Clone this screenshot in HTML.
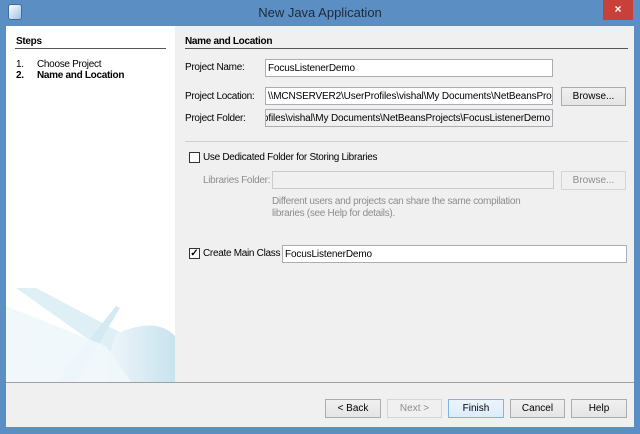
<!DOCTYPE html>
<html><head><style>
body{margin:0;width:640px;height:434px;overflow:hidden;background:#5b8ec2;font-family:"Liberation Sans",sans-serif;font-size:10px;color:#000;position:relative}
div,span{position:absolute;box-sizing:border-box}
.t{white-space:nowrap;letter-spacing:-0.3px}
.f{background:#fff;border:1px solid #abadb3;height:18px;padding:3px 2px;white-space:nowrap;overflow:hidden;letter-spacing:-0.15px}
.b{border:1px solid #acacac;background:linear-gradient(#f0f0f0,#e5e5e5);height:19px;text-align:center;line-height:17px}
.g{color:#8d8d8d}
</style></head><body>
<div style="left:8px;top:4px;width:14px;height:16px;border-radius:3px;background:linear-gradient(135deg,#fff,#9ec0e6);border:1px solid #3c6ea6"></div>
<div class="t" style="left:0;width:640px;top:5px;text-align:center;font-size:13px;color:#1d2b3a;letter-spacing:0">New Java Application</div>
<div style="left:603px;top:0;width:30px;height:20px;background:#c7403a;color:#fff;text-align:center;font-size:12px;line-height:19px;font-weight:bold">×</div>
<div style="left:6px;top:26px;width:628px;height:401px;background:#f0f0f0"></div>
<div style="left:6px;top:26px;width:169px;height:356px;background:#fff;overflow:hidden">
<svg width="169" height="356" style="position:absolute;left:0;top:0">
<defs><linearGradient id="g1" x1="0" y1="0" x2="1" y2="0"><stop offset="0" stop-color="#f2f8fb"/><stop offset="1" stop-color="#c8e3ee"/></linearGradient></defs>
<path d="M10 262 L30 262 L140 320 L150 340 L120 340 Z" fill="#deeff6"/>
<path d="M50 356 L110 280 L114 282 L70 356 Z" fill="#d4eaf3"/>
<path d="M110 308 Q150 290 169 310 L169 356 L95 356 Z" fill="url(#g1)"/>
<path d="M0 280 L100 320 L125 356 L0 356 Z" fill="#f0f7fb" opacity=".9"/>
</svg>
</div>
<div style="left:6px;top:382px;width:628px;height:1px;background:#a0a0a0"></div>
<div class="t" style="left:16px;top:36px;font-weight:bold">Steps</div>
<div style="left:15px;top:48px;width:151px;height:1px;background:#555"></div>
<div class="t" style="left:16px;top:59px">1.</div><div class="t" style="left:37px;top:59px">Choose Project</div>
<div class="t" style="left:16px;top:70px;font-weight:bold">2.</div><div class="t" style="left:37px;top:70px;font-weight:bold">Name and Location</div>
<div class="t" style="left:185px;top:36px;font-weight:bold">Name and Location</div>
<div style="left:185px;top:48px;width:443px;height:1px;background:#555"></div>
<div class="t" style="left:185px;top:62px">Project Name:</div>
<div class="f" style="left:265px;top:59px;width:288px">FocusListenerDemo</div>
<div class="t" style="left:185px;top:91px">Project Location:</div>
<div class="f" style="left:265px;top:87px;width:288px">\\MCNSERVER2\UserProfiles\vishal\My Documents\NetBeansProjects</div>
<div class="b" style="left:561px;top:87px;width:65px">Browse...</div>
<div class="t" style="left:185px;top:113px">Project Folder:</div>
<div class="f" style="left:265px;top:109px;width:288px;background:#f0f0f0;direction:rtl;text-align:left"><span style="position:static;direction:ltr;unicode-bidi:bidi-override">rProfiles\vishal\My Documents\NetBeansProjects\FocusListenerDemo</span></div>
<div style="left:185px;top:141px;width:443px;height:1px;background:#d0d0d0"></div>
<div style="left:189px;top:152px;width:11px;height:11px;border:1px solid #333;background:#fff"></div>
<div class="t" style="left:203px;top:152px">Use Dedicated Folder for Storing Libraries</div>
<div class="t g" style="left:203px;top:175px">Libraries Folder:</div>
<div class="f" style="left:272px;top:171px;width:282px;background:#f0f0f0;border-color:#ccc"></div>
<div class="b g" style="left:561px;top:171px;width:65px;border-color:#d5d5d5;background:#f0f0f0">Browse...</div>
<div class="t g" style="left:272px;top:196px">Different users and projects can share the same compilation</div>
<div class="t g" style="left:272px;top:208px">libraries (see Help for details).</div>
<div style="left:189px;top:248px;width:11px;height:11px;border:1px solid #333;background:#fff;font-size:10px;line-height:9px;text-align:center;font-weight:bold">✓</div>
<div class="t" style="left:203px;top:248px">Create Main Class</div>
<div class="f" style="left:282px;top:245px;width:345px">FocusListenerDemo</div>
<div class="b" style="left:325px;top:399px;width:56px">&lt; Back</div>
<div class="b g" style="left:387px;top:399px;width:55px;border-color:#d5d5d5;background:#f0f0f0">Next &gt;</div>
<div class="b" style="left:448px;top:399px;width:56px;border-color:#7eb4ea;background:linear-gradient(#ecf4fc,#dcecfc)">Finish</div>
<div class="b" style="left:510px;top:399px;width:55px">Cancel</div>
<div class="b" style="left:571px;top:399px;width:56px">Help</div>
</body></html>
